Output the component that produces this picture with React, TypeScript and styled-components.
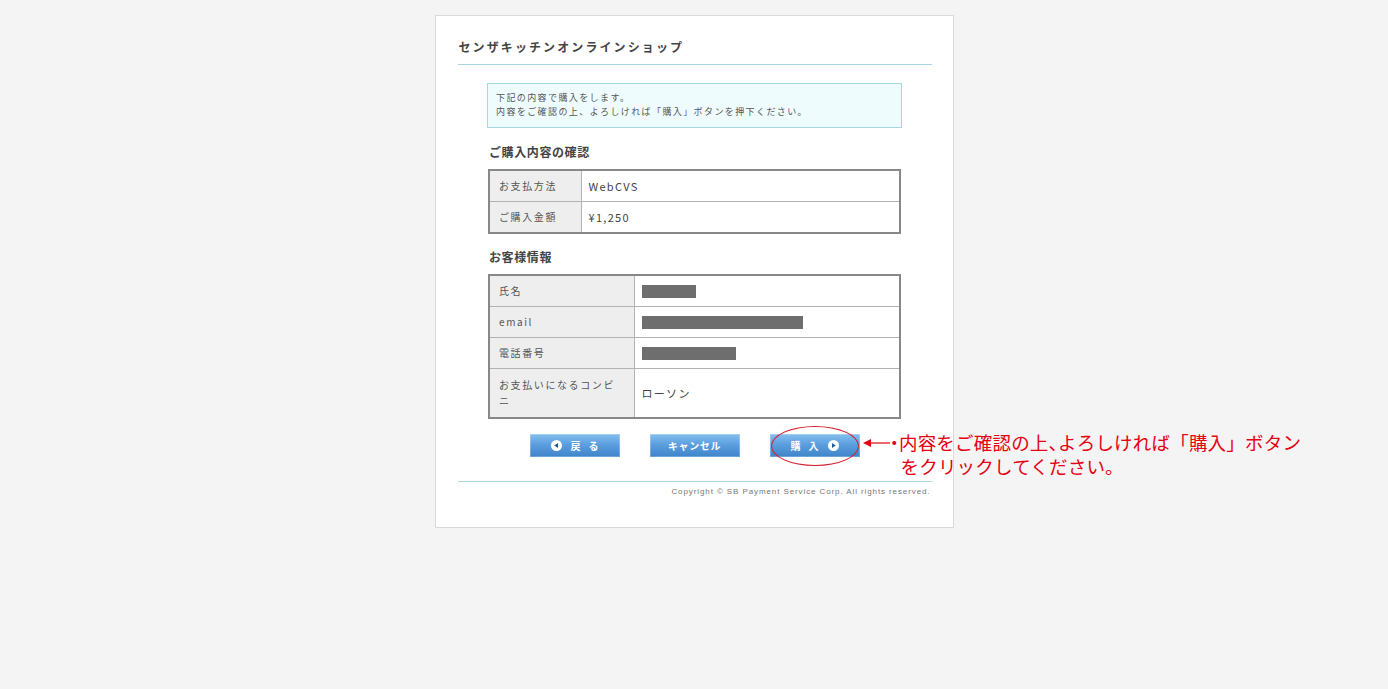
import React from "react";
import styled, { createGlobalStyle } from "styled-components";

const GlobalStyle = createGlobalStyle`
  html, body {
    margin: 0;
    padding: 0;
    background: #f4f4f4;
  }
  body {
    font-family: "Noto Sans CJK JP", "Noto Sans", sans-serif;
    color: #333;
  }
`;

const Page = styled.div`
  min-height: 689px;
  padding-top: 15px;
  box-sizing: border-box;
`;

const Card = styled.div`
  width: 519px;
  margin: 0 auto;
  box-sizing: border-box;
  background: #ffffff;
  border: 1px solid #d9d9d9;
  padding: 23px 21px 29px 22px;
`;

const ShopTitle = styled.h1`
  margin: 0;
  padding: 0 0 9px 1px;
  font-size: 12px;
  line-height: 16px;
  font-weight: 700;
  letter-spacing: 2.1px;
  color: #444;
  border-bottom: 1px solid #a9d5e3;
`;

const Content = styled.div`
  width: 415px;
  margin: 18px auto 0;
`;

const Notice = styled.div`
  background: #effcfd;
  border: 1px solid #a3d8df;
  padding: 7px 8px 8px;
  font-size: 9px;
  line-height: 14px;
  letter-spacing: 1.4px;
  color: #555;
`;

const SectionTitle = styled.h2<{ $top: number }>`
  margin: ${(p) => p.$top}px 0 9px;
  padding-left: 2px;
  font-size: 12px;
  line-height: 16px;
  font-weight: 700;
  letter-spacing: 0.6px;
  color: #444;
`;

const InfoTable = styled.table`
  width: 413px;
  margin: 0 auto;
  border-collapse: collapse;
  border: 2px solid #888;
  font-size: 10px;
  letter-spacing: 1.6px;
`;

const LabelCell = styled.th<{ $w: number; $tall?: boolean }>`
  width: ${(p) => p.$w}px;
  box-sizing: border-box;
  background: #eeeeee;
  border: 1px solid #b3b3b3;
  padding: ${(p) => (p.$tall ? "8px" : "7px")} 14px ${(p) => (p.$tall ? "8px" : "7px")} 9px;
  height: 31px;
  text-align: left;
  font-weight: 400;
  line-height: 16px;
  color: #555;
`;

const ValueCell = styled.td`
  border: 1px solid #b3b3b3;
  padding: 6px 7px;
  height: 31px;
  box-sizing: border-box;
  font-size: 11px;
  letter-spacing: 1.3px;
  line-height: 16px;
  color: #444;
`;

const Redacted = styled.span<{ $w: number }>`
  display: block;
  width: ${(p) => p.$w}px;
  height: 13px;
  margin-top: 1px;
  background: #6e6e6e;
`;

const ButtonRow = styled.div`
  display: flex;
  justify-content: center;
  gap: 30px;
  margin-top: 15px;
`;

const ButtonWrap = styled.div`
  position: relative;
`;

const NavButton = styled.button`
  width: 90px;
  height: 23px;
  border: none;
  padding: 0;
  display: flex;
  align-items: center;
  justify-content: center;
  gap: 9px;
  background: linear-gradient(#86c0f0 0%, #5c9fdf 45%, #3f84c9 100%);
  box-shadow: inset 0 0 0 1px rgba(255, 255, 255, 0.25);
  color: #ffffff;
  font-family: "Noto Sans CJK JP", sans-serif;
  font-size: 10px;
  font-weight: 700;
  letter-spacing: 0.6px;
  cursor: pointer;
`;

const Spaced = styled.span`
  letter-spacing: 8px;
  margin-right: -8px;
`;

const Highlight = styled.div`
  position: absolute;
  left: 1px;
  top: -8px;
  width: 86px;
  height: 38px;
  border: 1px solid #d4202c;
  border-radius: 50%;
  pointer-events: none;
`;

const Annotation = styled.div`
  position: absolute;
  left: 93px;
  top: -4px;
  display: flex;
  align-items: flex-start;
  white-space: nowrap;
  color: #e60012;
  font-family: "Noto Sans CJK JP", sans-serif;
  font-size: 18.5px;
  line-height: 24px;
  letter-spacing: 0.2px;
`;

const AnnotationText = styled.div`
  margin-left: -1px;
  p {
    margin: 0;
  }
  p + p {
    padding-left: 11px;
  }
`;

const Punct = styled.span`
  font-feature-settings: "halt";
`;

const Footer = styled.div`
  margin-top: 24px;
  border-top: 1px solid #a9d5e3;
  padding-top: 3px;
  text-align: right;
  font-size: 8px;
  line-height: 12px;
`;

const Copyright = styled.span`
  font-family: "Liberation Sans", sans-serif;
  font-size: 8px;
  line-height: 12px;
  letter-spacing: 0.9px;
  color: #777;
  padding-right: 1px;
`;

const CircleArrow = ({ dir }: { dir: "left" | "right" }) => (
  <svg width="11" height="11" viewBox="0 0 11 11">
    <circle cx="5.5" cy="5.5" r="5.5" fill="#ffffff" />
    {dir === "left" ? (
      <polygon points="3.2,5.5 7,3 7,8" fill="#1d5a9a" />
    ) : (
      <polygon points="7.8,5.5 4,3 4,8" fill="#1d5a9a" />
    )}
  </svg>
);

const RedArrow = () => (
  <svg width="28" height="12" viewBox="0 0 28 12" style={{ marginTop: 7 }}>
    <polygon points="0,6 8,2 8,10" fill="#e60012" />
    <line x1="7" y1="6" x2="27" y2="6" stroke="#e60012" strokeWidth="1.2" />
  </svg>
);

export default function App() {
  return (
    <Page>
      <GlobalStyle />
      <Card>
        <ShopTitle>センザキッチンオンラインショップ</ShopTitle>
        <Content>
          <Notice>
            下記の内容で購入をします。
            <br />
            内容をご確認の上、よろしければ「購入」ボタンを押下ください。
          </Notice>

          <SectionTitle $top={16}>ご購入内容の確認</SectionTitle>
          <InfoTable>
            <tbody>
              <tr>
                <LabelCell $w={92}>お支払方法</LabelCell>
                <ValueCell>WebCVS</ValueCell>
              </tr>
              <tr>
                <LabelCell $w={92}>ご購入金額</LabelCell>
                <ValueCell>¥1,250</ValueCell>
              </tr>
            </tbody>
          </InfoTable>

          <SectionTitle $top={15}>お客様情報</SectionTitle>
          <InfoTable>
            <tbody>
              <tr>
                <LabelCell $w={145}>氏名</LabelCell>
                <ValueCell>
                  <Redacted $w={54} />
                </ValueCell>
              </tr>
              <tr>
                <LabelCell $w={145}>email</LabelCell>
                <ValueCell>
                  <Redacted $w={161} />
                </ValueCell>
              </tr>
              <tr>
                <LabelCell $w={145}>電話番号</LabelCell>
                <ValueCell>
                  <Redacted $w={94} />
                </ValueCell>
              </tr>
              <tr>
                <LabelCell $w={145} $tall>
                  お支払いになるコンビニ
                </LabelCell>
                <ValueCell>ローソン</ValueCell>
              </tr>
            </tbody>
          </InfoTable>
        </Content>

        <ButtonRow>
          <ButtonWrap>
            <NavButton>
              <CircleArrow dir="left" />
              <Spaced>戻る</Spaced>
            </NavButton>
          </ButtonWrap>
          <ButtonWrap>
            <NavButton>キャンセル</NavButton>
          </ButtonWrap>
          <ButtonWrap>
            <NavButton>
              <Spaced>購入</Spaced>
              <CircleArrow dir="right" />
            </NavButton>
            <Highlight />
            <Annotation>
              <RedArrow />
              <AnnotationText>
                <p>
                  <Punct>・</Punct>内容をご確認の上<Punct>、</Punct>よろしければ「購入」ボタン
                </p>
                <p>をクリックしてください。</p>
              </AnnotationText>
            </Annotation>
          </ButtonWrap>
        </ButtonRow>

        <Footer>
          <Copyright>Copyright © SB Payment Service Corp. All rights reserved.</Copyright>
        </Footer>
      </Card>
    </Page>
  );
}
